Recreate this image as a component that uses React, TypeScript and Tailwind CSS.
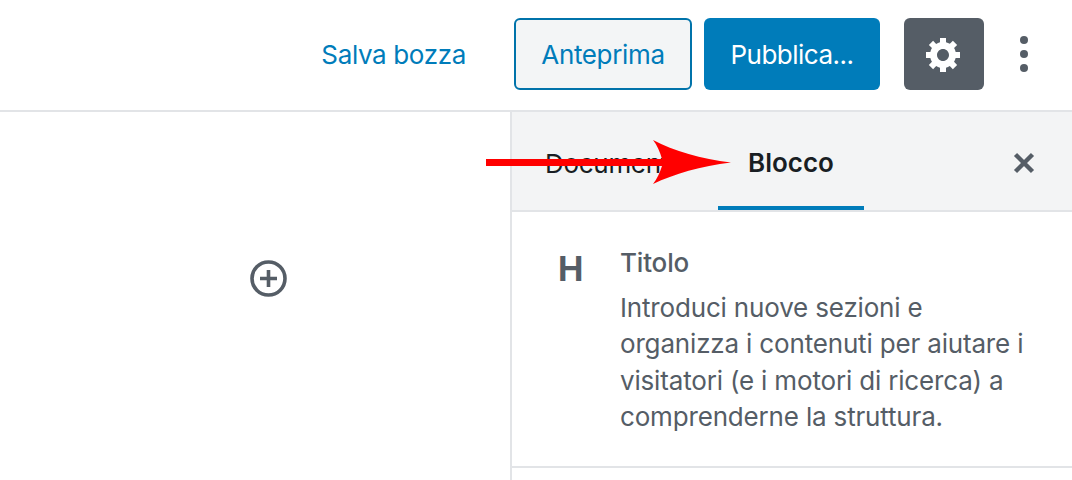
export default function App() {
  return (
    <div className="relative h-[480px] w-[1072px] overflow-hidden bg-white font-['Inter','Roboto',sans-serif] text-[26px]">
      <header className="flex h-[112px] items-center border-b-2 border-[#e2e4e7] pb-[2px]">
        <div className="flex flex-1 items-center justify-end tracking-[-0.35px]">
          <span className="mr-[48px] text-[#007cba]">Salva bozza</span>
          <button className="mr-[12px] flex h-[72px] w-[178px] items-center justify-center rounded-[6px] border-2 border-[#0073aa] bg-[#f3f5f6] text-[#007cba]">Anteprima</button>
          <button className="mr-[24px] flex h-[72px] w-[176px] items-center justify-center rounded-[6px] bg-[#007cba] tracking-[-0.5px] text-white">Pubblica...</button>
          <button className="flex h-[72px] w-[80px] items-center justify-center rounded-[6px] bg-[#555d66]">
            <svg viewBox="0 0 20 20" className="ml-[-1px] h-[40px] w-[40px]" fill="#fff">
              <path d="M18 12h-2.18c-.17.7-.44 1.35-.81 1.93l1.54 1.54-2.12 2.12-1.54-1.54c-.58.36-1.23.63-1.89.79V19H8v-2.18c-.68-.16-1.33-.43-1.91-.79l-1.54 1.54-2.12-2.12 1.54-1.54c-.36-.58-.63-1.23-.79-1.91H1V9h2.18c.16-.7.44-1.35.8-1.94L2.43 5.53l2.12-2.12 1.54 1.54c.58-.37 1.24-.64 1.91-.81V2h3v2.14c.68.16 1.33.43 1.91.79l1.54-1.54 2.12 2.12-1.54 1.54c.36.59.64 1.24.8 1.95H18v3zm-8.5 1.5c1.66 0 3-1.34 3-3s-1.34-3-3-3-3 1.34-3 3 1.34 3 3 3z" />
            </svg>
          </button>
          <div className="flex w-[80px] flex-col items-center gap-[6px]">
            <span className="h-[8px] w-[8px] rounded-full bg-[#555d66]" />
            <span className="h-[8px] w-[8px] rounded-full bg-[#555d66]" />
            <span className="h-[8px] w-[8px] rounded-full bg-[#555d66]" />
          </div>
          <div className="w-[8px]" />
        </div>
      </header>
      <div className="flex h-[368px]">
        <main className="w-[510px] pl-[250px] pt-[148px]">
          <svg viewBox="0 0 38 38" className="h-[38px] w-[38px]" fill="none" stroke="#555d66">
            <circle cx="18.5" cy="18.5" r="16.5" strokeWidth="3.6" />
            <path d="M18.5 10v17M10 18.5h17" strokeWidth="3.6" />
          </svg>
        </main>
        <aside className="w-[562px] border-l-2 border-[#e2e4e7]">
          <div className="flex h-[100px] items-stretch border-b-2 border-[#e2e4e7] bg-[#f3f4f5]">
            <span className="ml-[33px] w-[173px] self-center pt-[4px] tracking-[-0.3px] text-[#191e23]">Documento</span>
            <div className="flex w-[146px] items-center justify-center border-b-4 border-[#007cba] pt-[6px] font-semibold text-[#191e23]">Blocco</div>
            <div className="ml-auto mr-[36px] flex items-center pt-[3px]">
              <svg viewBox="0 0 24 24" className="h-[24px] w-[24px]" fill="none" stroke="#555d66" strokeWidth="4.4">
                <path d="M3.5 3.5l17 17M20.5 3.5l-17 17" />
              </svg>
            </div>
          </div>
          <section className="flex h-[256px] border-b-2 border-[#e2e4e7] pl-[46px] pt-[35px]">
            <span className="mt-[2px] w-[62px] text-[34px] font-bold leading-[40px] text-[#555d66]">H</span>
            <div className="w-[412px] tracking-[-0.17px] text-[#555d66]">
              <h2 className="text-[26px] font-medium leading-[32px]">Titolo</h2>
              <p className="mt-[11px] leading-[36.4px]">Introduci nuove sezioni e organizza i contenuti per aiutare i visitatori (e i motori di ricerca) a comprenderne la struttura.</p>
            </div>
          </section>
        </aside>
      </div>
      <svg viewBox="0 0 246 46" className="absolute left-[486px] top-[140px] h-[46px] w-[246px]">
        <path fill="#ff0000" d="M0 19H176C174 12 171 5 167 0C188 11 215 19 245 22.5C215 26 188 34 167 44C171 39 174 32 176 26H0Z" />
      </svg>
    </div>
  );
}
